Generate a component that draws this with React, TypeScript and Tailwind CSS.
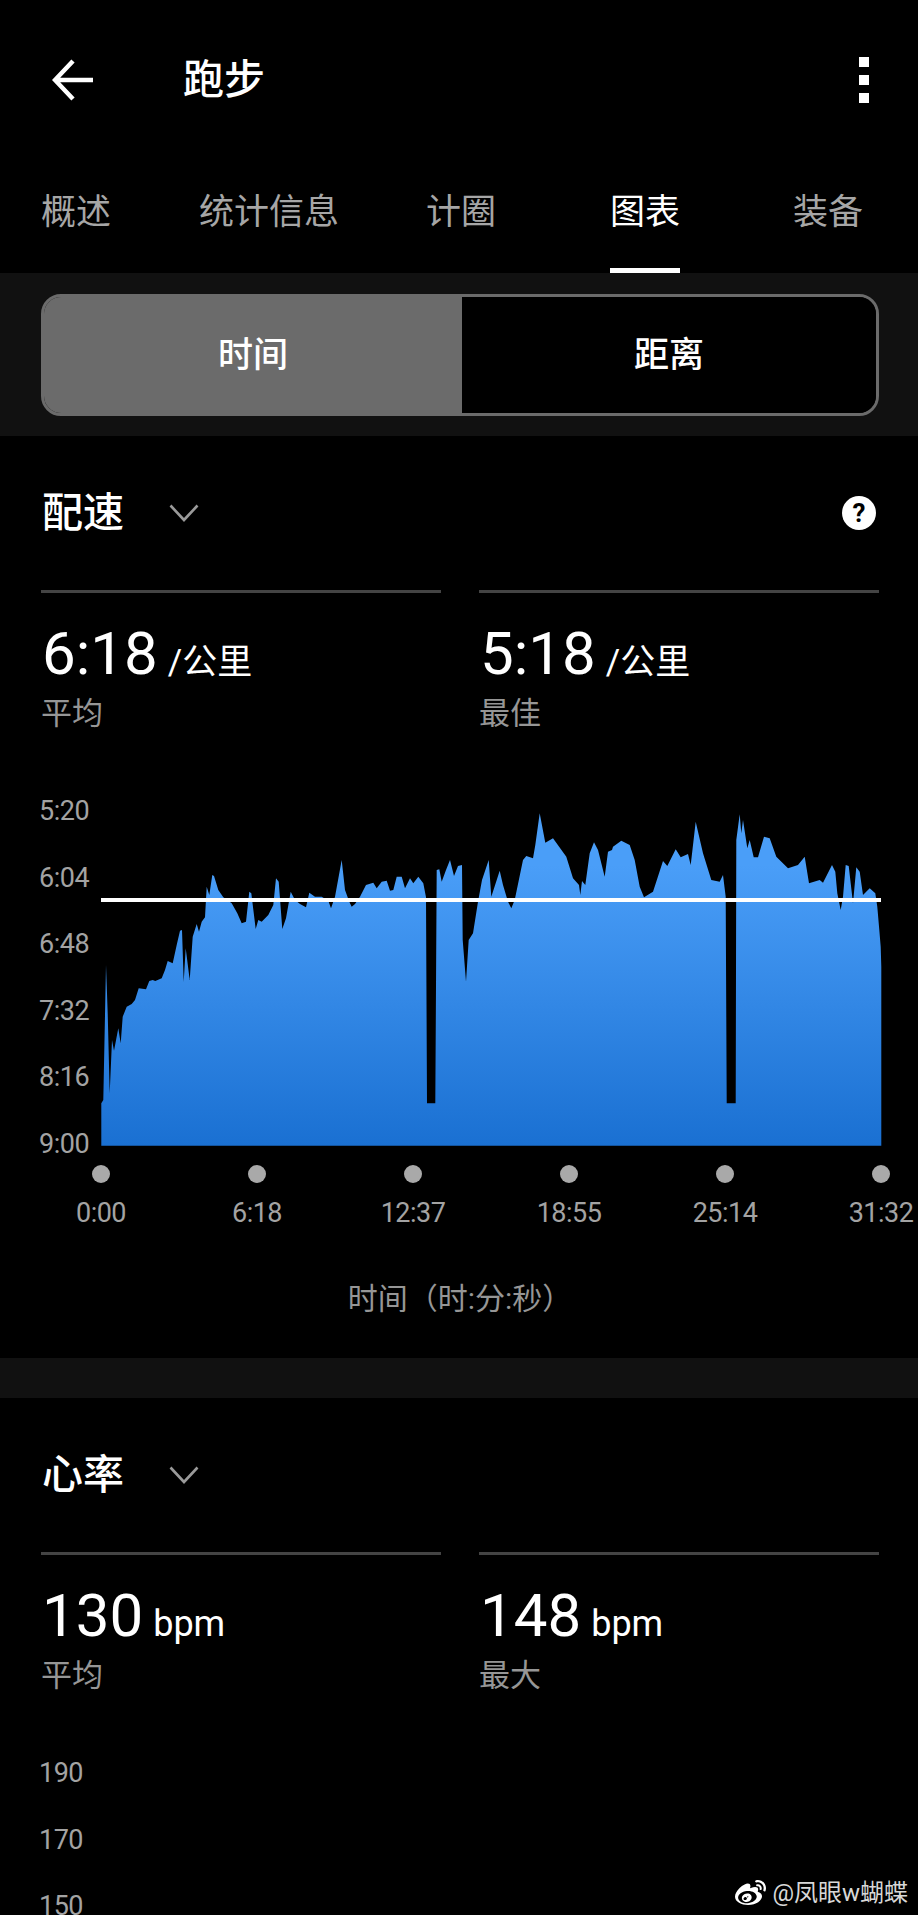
import { FaWeibo } from "react-icons/fa";

const left: [number, number][] = [[304,1097],[304,970],[310,960],[318,555],[323,700],[329,940],[336,780],[342,812],[355,745],[362,790],[368,710],[380,680],[395,672],[405,660],[416,625],[438,628],[448,603],[458,600],[466,603],[485,595],[495,570],[503,543],[518,550],[530,495],[540,452],[546,450],[551,605],[557,505],[569,600],[578,470],[590,432],[597,455],[605,425],[615,412],[620,320],[628,345],[637,285],[642,288],[655,330],[670,352],[695,370],[712,400],[725,430],[738,425],[748,335],[754,340],[767,447],[775,420],[785,425],[805,405],[820,375],[828,295],[836,305],[847,447],[858,415],[872,335],[885,360],[900,372],[918,382],[928,338],[945,350],[965,350],[985,362],[993,385],[1005,350],[1025,240],[1035,330],[1048,365],[1055,380],[1065,372],[1080,350],[1098,315],[1120,308],[1130,325],[1145,305],[1160,302],[1170,332],[1180,330],[1190,290],[1205,290],[1215,325],[1230,295],[1240,310],[1255,290],[1270,310],[1278,352],[1281,970],[1306,970],[1310,270],[1318,268],[1325,305],[1338,270],[1350,240],[1362,288]];
const right: [number, number][] = [[0,258],[12,255],[14,480],[24,605],[32,480],[45,460],[60,365],[72,300],[92,240],[100,350],[125,272],[135,315],[150,365],[160,385],[170,360],[195,240],[205,228],[225,235],[232,195],[245,100],[262,188],[285,175],[325,230],[345,295],[363,315],[367,345],[372,303],[382,315],[395,220],[408,187],[420,210],[440,290],[450,215],[462,210],[465,200],[490,182],[515,195],[530,240],[545,320],[558,352],[585,335],[615,243],[628,258],[653,208],[668,232],[690,222],[698,255],[713,125],[735,220],[760,300],[785,305],[795,285],[803,350],[806,970],[833,970],[835,180],[845,103],[850,160],[855,120],[868,205],[875,180],[887,232],[900,232],[918,170],[935,175],[955,230],[990,265],[1020,255],[1040,230],[1053,310],[1085,300],[1095,308],[1122,255],[1132,275],[1138,340],[1148,390],[1155,350],[1163,255],[1172,258],[1185,370],[1195,262],[1205,275],[1215,345],[1235,325],[1252,340],[1258,380],[1264,450],[1268,500],[1270,560],[1270,1097]];

const areaPoints = [
  ...left.map(([x, y]) => `${(x / 3).toFixed(1)},${(y / 3).toFixed(1)}`),
  ...right.map(([x, y]) => `${(458 + x / 3).toFixed(1)},${(y / 3).toFixed(1)}`),
].join(" ");

const paceLabels = ["5:20", "6:04", "6:48", "7:32", "8:16", "9:00"];
const timeLabels = ["0:00", "6:18", "12:37", "18:55", "25:14", "31:32"];

function Chevron() {
  return (
    <svg width="30" height="18" viewBox="0 0 30 18" fill="none" className="ml-[45px]">
      <path d="M1.500 1.500 15 16 28.500 1.500" stroke="#9a9a9a" strokeWidth="2.600" />
    </svg>
  );
}

function Stat({ value, unit, label, unitSize }: { value: string; unit: string; label: string; unitSize: string }) {
  return (
    <div className="border-t-[3px] border-[#444444]">
      <div className="mt-[25px] flex h-[72px] items-baseline pl-[1px] text-white">
        <span className="text-[60px] leading-[72px]">{value}</span>
        <span className={`ml-[10px] leading-[72px] ${unitSize}`}>{unit}</span>
      </div>
      <div className="mt-[2px] h-[44px] text-[31px] leading-[44px] text-[#969696]">{label}</div>
    </div>
  );
}

function SectionTitle({ title, help }: { title: string; help?: boolean }) {
  return (
    <div className="flex h-[154px] items-center justify-between pl-[42px] pr-[42px]">
      <div className="flex items-center">
        <span className="text-[41px] font-medium leading-[50px] text-white">{title}</span>
        <Chevron />
      </div>
      {help && (
        <span className="flex h-[34px] w-[34px] items-center justify-center rounded-full bg-white text-[26px] font-bold leading-none text-black">
          ?
        </span>
      )}
    </div>
  );
}

export default function App() {
  return (
    <div className="relative h-[1915px] w-[918px] overflow-hidden bg-black font-['Roboto','Noto_Sans_CJK_SC',sans-serif]">
      <header className="flex h-[160px] items-center justify-between pl-[52px] pr-[49px]">
        <div className="flex items-center">
          <svg width="42" height="42" viewBox="0 0 42 42" fill="none">
            <path d="M41 21H3M21 2 3 21l18 19" stroke="#ffffff" strokeWidth="4.500" />
          </svg>
          <span className="ml-[89px] text-[41px] font-medium leading-[50px] text-white">跑步</span>
        </div>
        <div className="flex flex-col gap-[8px]">
          <span className="h-[10px] w-[10px] bg-white" />
          <span className="h-[10px] w-[10px] bg-white" />
          <span className="h-[10px] w-[10px] bg-white" />
        </div>
      </header>

      <nav className="flex h-[113px] text-[35px] leading-[106px] text-[#a6a6a6]">
        <span className="ml-[41px]">概述</span>
        <span className="ml-[88px]">统计信息</span>
        <span className="ml-[87px]">计圈</span>
        <span className="relative ml-[114px] h-[113px] text-white">
          图表
          <span className="absolute bottom-0 left-0 h-[5px] w-full bg-white" />
        </span>
        <span className="ml-[113px]">装备</span>
      </nav>

      <div className="h-[163px] bg-[#111111] pl-[41px] pr-[39px] pt-[21px]">
        <div className="flex h-[122px] overflow-hidden rounded-[20px] border-[3px] border-[#6b6b6b] text-[35px] font-medium text-white">
          <div className="flex w-[418px] items-center justify-center bg-[#6b6b6b] pt-[2px]">时间</div>
          <div className="flex flex-1 items-center justify-center bg-black pt-[2px]">距离</div>
        </div>
      </div>

      <SectionTitle title="配速" help />
      <div className="grid h-[190px] grid-cols-2 gap-[38px] pl-[41px] pr-[39px]">
        <Stat value="6:18" unit="/公里" label="平均" unitSize="text-[35px]" />
        <Stat value="5:18" unit="/公里" label="最佳" unitSize="text-[35px]" />
      </div>

      <div className="flex h-[366px]">
        <div className="w-[101px] pl-[39px] text-[27px] tracking-[-0.5px] text-[#a3a3a3]">
          {paceLabels.map((l) => (
            <div key={l} className="flex h-[66.600px] items-center first:mt-[-2px]">
              {l}
            </div>
          ))}
        </div>
        <svg width="782" height="366" viewBox="101 0 782 366" className="block">
          <defs>
            <linearGradient id="pace" gradientUnits="userSpaceOnUse" x1="0" y1="85" x2="0" y2="366">
              <stop offset="0" stopColor="#4a9ef8" />
              <stop offset="1" stopColor="#1a70d2" />
            </linearGradient>
          </defs>
          <polygon points={areaPoints} fill="url(#pace)" />
          <rect x="101" y="118" width="780" height="4" fill="#ffffff" />
        </svg>
      </div>

      <div className="ml-[92px] mt-[19px] flex w-[798px] justify-between">
        {timeLabels.map((t) => (
          <div key={t} className="flex w-[18px] flex-col items-center">
            <span className="h-[18px] w-[18px] rounded-full bg-[#a9a9a9]" />
            <span className="mt-[14px] flex h-[32px] w-0 items-center justify-center whitespace-nowrap text-[27px] tracking-[-0.5px] text-[#a3a3a3]">
              {t}
            </span>
          </div>
        ))}
      </div>

      <div className="mt-[50px] ml-[2px] h-[40px] text-center text-[30px] leading-[40px] text-[#969696]">时间（时:分:秒）</div>

      <div className="mt-[39px] h-[40px] bg-[#111111]" />

      <SectionTitle title="心率" />
      <div className="grid h-[188px] grid-cols-2 gap-[38px] pl-[41px] pr-[39px]">
        <Stat value="130" unit="bpm" label="平均" unitSize="text-[36px]" />
        <Stat value="148" unit="bpm" label="最大" unitSize="text-[36px]" />
      </div>

      <div className="pl-[39px] text-[27px] tracking-[-0.5px] text-[#a3a3a3]">
        {["190", "170", "150"].map((l) => (
          <div key={l} className="flex h-[66.600px] items-center">
            {l}
          </div>
        ))}
      </div>

      <div className="absolute bottom-[6px] right-[10px] flex items-center text-[24px] leading-[32px] text-[#d8d8d8]">
        <FaWeibo className="mr-[6px] h-[31px] w-[31px] text-white" />
        <span>@凤眼w蝴蝶</span>
      </div>
    </div>
  );
}
